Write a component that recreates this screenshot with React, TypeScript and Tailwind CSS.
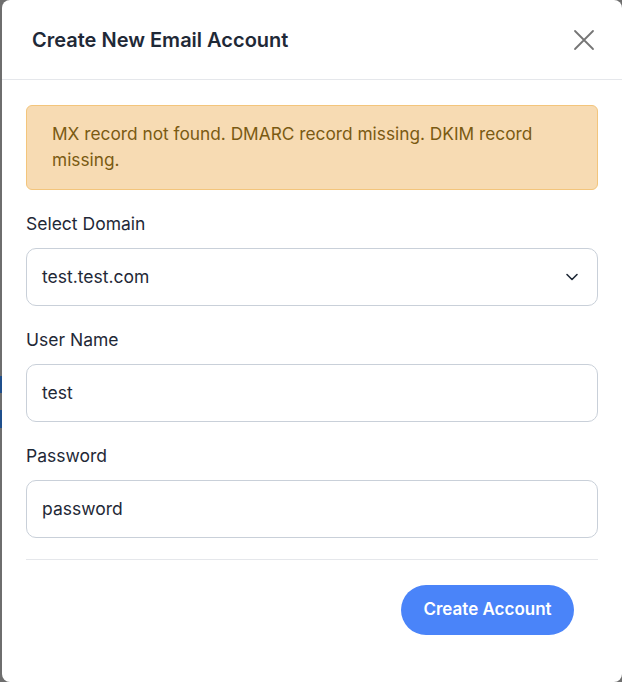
import React from "react";

export default function App() {
  const font = { fontFamily: "Inter, 'Noto Sans', sans-serif" };
  return (
    <div className="relative w-[622px] h-[682px] bg-[#6e6e6e] flex pl-[2px] overflow-hidden" style={font}>
      <div className="absolute left-0 top-[376px] w-[2px] h-[17px] bg-[#1f4f8c]" />
      <div className="absolute left-0 top-[410px] w-[2px] h-[18px] bg-[#1f4f8c]" />
      <div className="w-[620px] h-[682px] bg-white rounded-lg flex flex-col">
        <div className="h-[80px] shrink-0 flex items-center justify-between pl-[30px] pr-[27px] border-b border-[#e5e7eb]">
          <h2 className="text-[20px] font-semibold text-[#1f2937]">Create New Email Account</h2>
          <svg width="22" height="22" viewBox="0 0 22 22" className="text-[#757575]">
            <path d="M2 2 L20 20 M20 2 L2 20" stroke="currentColor" strokeWidth="1.8" strokeLinecap="round" />
          </svg>
        </div>
        <div className="px-6 pt-[25px] flex flex-col gap-[22px]">
          <div className="rounded-md border border-[#f3c57c] bg-[#f7dbb3] pl-[25px] pr-6 pt-[15px] pb-[16px] text-[17.3px] leading-[26px] text-[#7a5a12]">
            MX record not found. DMARC record missing. DKIM record missing.
          </div>
          <div className="flex flex-col gap-3">
            <label className="text-[17.5px] leading-6 text-[#1f2937]">Select Domain</label>
            <div className="h-[58px] rounded-[10px] border border-[#c9d0d9] flex items-center justify-between pl-[15px] pr-[18px]">
              <span className="text-[17.5px] text-[#1f2937]">test.test.com</span>
              <svg width="14" height="14" viewBox="0 0 14 14" className="text-[#1f2937]">
                <path d="M2 4.5 L7 9.5 L12 4.5" fill="none" stroke="currentColor" strokeWidth="1.6" strokeLinecap="round" strokeLinejoin="round" />
              </svg>
            </div>
          </div>
          <div className="flex flex-col gap-3">
            <label className="text-[17.5px] leading-6 text-[#1f2937]">User Name</label>
            <div className="h-[58px] rounded-[10px] border border-[#c9d0d9] flex items-center pl-[15px]">
              <span className="text-[17.5px] text-[#1f2937]">test</span>
            </div>
          </div>
          <div className="flex flex-col gap-3">
            <label className="text-[17.5px] leading-6 text-[#1f2937]">Password</label>
            <div className="h-[58px] rounded-[10px] border border-[#c9d0d9] flex items-center pl-[15px]">
              <span className="text-[17.5px] text-[#1f2937]">password</span>
            </div>
          </div>
        </div>
        <div className="mx-6 mt-[21px] border-t border-[#e5e7eb]" />
        <div className="flex justify-end pr-[48px] pt-[25px]">
          <button className="h-[50px] w-[173px] rounded-full bg-[#4a84f9] text-white text-[17px] font-semibold">Create Account</button>
        </div>
      </div>
    </div>
  );
}
